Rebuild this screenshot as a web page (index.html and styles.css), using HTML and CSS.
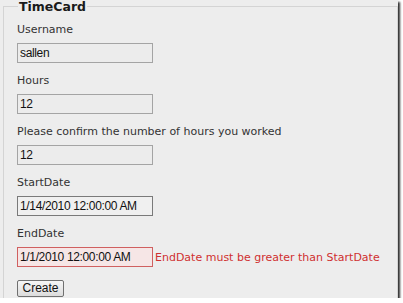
FILE: index.html
```html
<!DOCTYPE html>
<html>
<head>
<meta charset="utf-8">
<link rel="stylesheet" href="styles.css">
</head>
<body>
<div class="frame">
  <fieldset class="card">
    <legend class="title">TimeCard</legend>
    <div class="field first">
      <label class="label">Username</label>
      <div class="row"><span class="input">sallen</span></div>
    </div>
    <div class="field">
      <label class="label">Hours</label>
      <div class="row"><span class="input">12</span></div>
    </div>
    <div class="field">
      <label class="label">Please confirm the number of hours you worked</label>
      <div class="row"><span class="input">12</span></div>
    </div>
    <div class="field">
      <label class="label">StartDate</label>
      <div class="row"><span class="input dark">1/14/2010 12:00:00 AM</span></div>
    </div>
    <div class="field">
      <label class="label">EndDate</label>
      <div class="row"><span class="input error">1/1/2010 12:00:00 AM</span><span class="msg">EndDate must be greater than StartDate</span></div>
    </div>
    <div class="actions"><span class="btn">Create</span></div>
  </fieldset>
</div>
</body>
</html>
```
FILE: styles.css
```css
html, body { margin: 0; padding: 0; background: #fff; }
.frame {
  width: 398px;
  height: 298px;
  background: #ededed;
  box-shadow: 2px 2px 2px #303030;
  box-sizing: border-box;
  padding: 0 0 0 3px;
  overflow: hidden;
}
.card {
  margin: 0;
  border: 1px solid #d4d4d4;
  padding: 0 0 0 13px;
  height: 320px;
  box-sizing: border-box;
}
.title {
  font-family: "DejaVu Sans", sans-serif;
  font-weight: bold;
  font-size: 12.5px;
  color: #1a1a1a;
  padding: 0 1px;
  margin-left: 1px;
  line-height: 13px;
}
.field { display: flex; flex-direction: column; }
.label {
  font-family: "DejaVu Sans", sans-serif;
  font-size: 11px;
  color: #333;
  line-height: 16px;
  margin-top: 10px;
}
.field.first .label { margin-top: 9px; }
.row { display: flex; align-items: center; margin-top: 5px; }
.input {
  box-sizing: border-box;
  width: 136px;
  height: 20px;
  border: 1px solid #a4a4a4;
  background: #ececec;
  font-family: "Liberation Sans", sans-serif;
  font-size: 12px;
  letter-spacing: -0.35px;
  line-height: 18px;
  padding-left: 2px;
  color: #111;
}
.input.dark { border-color: #7a7a7a; background: #f0f0f0; }
.input.error { border-color: #d06060; background: #f6e6e6; }
.msg {
  margin-left: 2px;
  font-family: "DejaVu Sans", sans-serif;
  font-size: 11px;
  color: #d03030;
}
.actions { display: flex; margin-top: 13px; }
.btn {
  box-sizing: border-box;
  width: 47px;
  height: 17px;
  border: 1px solid #707070;
  border-radius: 2px;
  background: linear-gradient(#f6f6f6, #dcdcdc);
  font-family: "Liberation Sans", sans-serif;
  font-size: 12px;
  line-height: 15px;
  text-align: center;
  color: #111;
}
```
